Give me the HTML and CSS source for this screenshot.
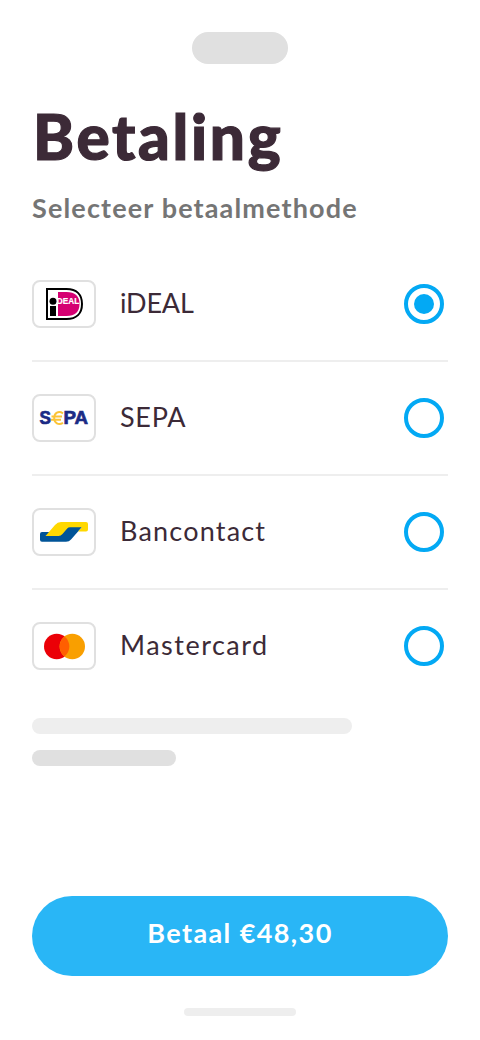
FILE: index.html
```html
<!DOCTYPE html>
<html lang="nl">
<head>
<meta charset="utf-8">
<title>Betaling</title>
<link rel="stylesheet" href="styles.css">
</head>
<body>
<main class="screen">
  <div class="notch"></div>
  <h1 class="title">Betaling</h1>
  <p class="subtitle">Selecteer betaalmethode</p>
  <ul class="methods">
    <li class="method">
      <span class="logo"><svg width="60" height="44" viewBox="2 2 60 44">
        <path d="M15 9H34.5C44.5 9 50 14.5 50 24S44.5 39 34.5 39H15Z" fill="#fff" stroke="#000" stroke-width="2"/>
        <path d="M26 12H34.5C43 12 47.5 16 47.5 24S43 36 34.5 36H26Z" fill="#d50072"/>
        <circle cx="21" cy="21.2" r="3.5" fill="#000"/>
        <path d="M18 26h6v10h-6z" fill="#000"/>
        <text x="24.8" y="24.2" class="ideal-text" textLength="22.4" lengthAdjust="spacingAndGlyphs">DEAL</text>
      </svg></span>
      <span class="name ideal">iDEAL</span><span class="radio checked"></span>
    </li>
    <li class="method">
      <span class="logo"><svg width="60" height="44" viewBox="2 2 60 44">
        <text x="7.6" y="30.3" class="sepa-text" textLength="11.4" lengthAdjust="spacingAndGlyphs">S</text>
        <path d="M31 19.3C26.5 16.5 22.2 19 22.2 24S26.5 31.5 31 28.8M19.5 22.5H30M19 25.7H29" fill="none" stroke="#fbc437" stroke-width="2"/>
        <text x="31.4" y="30.3" class="sepa-text" textLength="24.6" lengthAdjust="spacingAndGlyphs">PA</text>
      </svg></span>
      <span class="name sepa">SEPA</span><span class="radio"></span>
    </li>
    <li class="method">
      <span class="logo"><svg width="60" height="44" viewBox="2 2 60 44">
        <path d="M10 24H30L36 19H50L39 31.5Q37.2 33.7 34 33.7H10Q8 33.7 8 31.7V26Q8 24 10 24Z" fill="#005498"/>
        <path d="M13.5 28L23 17Q25.5 14 29 14H54Q56 14 56 16V21.5Q56 23.5 54 23.5H46L50 19.2H38Q36.3 19.2 35.2 20.5L30.5 26Q28.8 28 26.5 28Z" fill="#ffd800"/>
      </svg></span>
      <span class="name bancontact">Bancontact</span><span class="radio"></span>
    </li>
    <li class="method">
      <span class="logo"><svg width="60" height="44" viewBox="2 2 60 44">
        <circle cx="24.7" cy="24.5" r="12.7" fill="#eb0007"/>
        <circle cx="40.3" cy="24.5" r="12.7" fill="#f99f00"/>
        <path d="M32.5 14.5A12.7 12.7 0 0 1 32.5 34.5A12.7 12.7 0 0 1 32.5 14.5Z" fill="#ff5f00"/>
      </svg></span>
      <span class="name mastercard">Mastercard</span><span class="radio"></span>
    </li>
  </ul>
  <div class="line long"></div>
  <div class="line short"></div>
  <button class="pay">Betaal €48,30</button>
  <div class="home"></div>
</main>
</body>
</html>
```
FILE: styles.css
```css
* { box-sizing: border-box; }
body { margin: 0; background: #fff; color: #3c2a37; font-family: Lato, "Open Sans", sans-serif; }
.screen { display: flex; flex-direction: column; width: 480px; height: 1040px; padding: 32px 32px 24px; }
.notch { flex: none; align-self: center; width: 96px; height: 32px; border-radius: 16px; background: #e0e0e0; }
.title { margin: 32px 0 0; height: 82px; padding-left: 1px; line-height: 80px; font-size: 62px; font-weight: 900; letter-spacing: 2.7px; -webkit-text-stroke: 1.2px #3c2a37; white-space: nowrap; }
.subtitle { margin: 12px 0 0; height: 36px; line-height: 36px; font-size: 27px; font-weight: 700; letter-spacing: 1.15px; color: #757575; white-space: nowrap; }
.methods { flex: none; list-style: none; margin: 22px 0 0; padding: 0; }
.method { display: flex; align-items: center; height: 114px; padding-right: 4px; border-bottom: 2px solid #eee; }
.method:last-child { height: 112px; border-bottom: 0; }
.logo { flex: none; width: 64px; height: 48px; border: 2px solid #e0e0e0; border-radius: 8px; }
.logo svg { display: block; }
.ideal-text { font: 700 9px "Liberation Sans", sans-serif; fill: #fff; stroke: #fff; stroke-width: .2px; }
.sepa-text { font: 700 18px "Liberation Sans", sans-serif; fill: #1b2b85; stroke: #1b2b85; stroke-width: .7px; }
.name { flex: 1; padding-bottom: 2px; margin-left: 24px; line-height: 36px; font-size: 27px; font-weight: 400; }
.ideal { letter-spacing: -.2px; }
.sepa { letter-spacing: .7px; }
.bancontact { letter-spacing: 1.2px; }
.mastercard { letter-spacing: 1.5px; }
.radio { flex: none; width: 40px; height: 40px; border: 4px solid #03a9f4; border-radius: 50%; }
.checked { padding: 6px; }
.checked::before { content: ""; display: block; width: 20px; height: 20px; border-radius: 50%; background: #03a9f4; }
.line { flex: none; height: 16px; border-radius: 8px; }
.long { width: 320px; margin-top: 16px; background: #eee; }
.short { width: 144px; margin-top: 16px; background: #e0e0e0; }
.pay { flex: none; height: 80px; margin: 130px 0 0; padding: 0 0 6px; border: 0; border-radius: 40px; background: #29b6f6; color: #fff; font: 700 27px/36px Lato, sans-serif; letter-spacing: 1.4px; }
.home { flex: none; align-self: center; width: 112px; height: 8px; margin-top: 32px; border-radius: 4px; background: #eee; }
```
